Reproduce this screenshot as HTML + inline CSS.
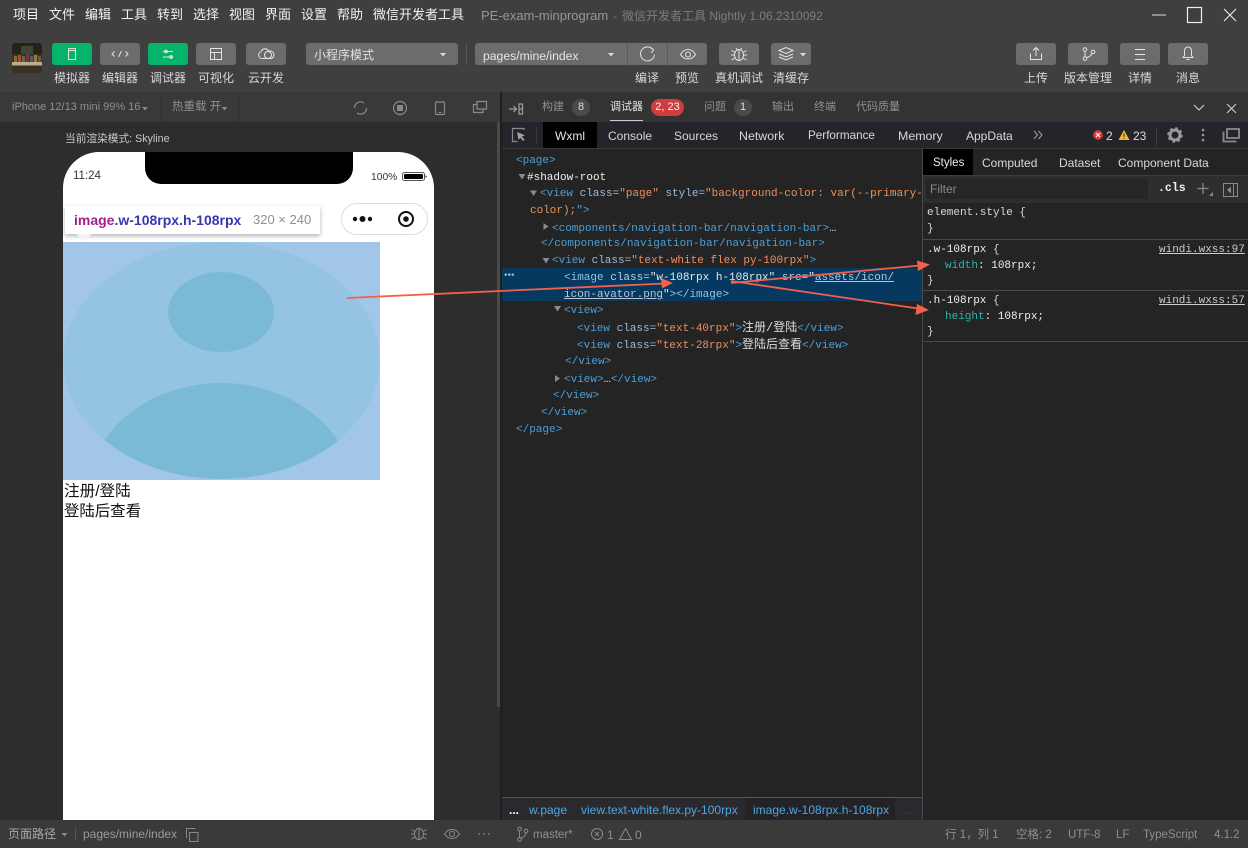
<!DOCTYPE html>
<html><head><meta charset="utf-8">
<style>
html,body{margin:0;padding:0;width:1248px;height:848px;overflow:hidden;background:#2d2d2d}
body{position:relative;font-family:"Liberation Sans","Noto Sans CJK SC",sans-serif;font-size:12px;color:#ddd}
.r{position:absolute}
.t{position:absolute;white-space:nowrap;line-height:16px}
.btn{position:absolute;top:43px;height:22px;background:#6c6c6c;border-radius:3px}
.g{background:#07b36a}
.lb{position:absolute;top:69px;line-height:18px;white-space:nowrap;color:#d8d8d8;font-size:12px;transform:translateX(-50%)}
.m{position:absolute;top:7px;font-size:13px;line-height:16px;color:#f2f2f2;white-space:nowrap}
.c{position:absolute;font-family:"Liberation Mono","Noto Sans CJK SC",monospace;font-size:11px;line-height:16px;white-space:nowrap;color:#4b9fd8}
.c i{font-style:normal;color:#9dbcdc}.c b{font-weight:normal;color:#ef8f5f}.c u{color:#b8c8d8}.c em{font-style:normal;color:#ddd;font-size:12px}
.s{position:absolute;font-family:"Liberation Mono",monospace;font-size:11px;line-height:16px;white-space:nowrap;color:#d8d8d8}
.s u{color:#ccc}.s i{font-style:normal;color:#2bb5a8}
svg{position:absolute;overflow:visible}
.ic{fill:none;stroke:#e4e4e4;stroke-width:1}
</style></head><body>

<!-- top bar -->
<div class="r" style="left:0;top:0;width:1248px;height:92px;background:#3f3f3f"></div>
<span class="m" style="left:13px">项目</span><span class="m" style="left:49px">文件</span><span class="m" style="left:85px">编辑</span><span class="m" style="left:121px">工具</span><span class="m" style="left:157px">转到</span><span class="m" style="left:193px">选择</span><span class="m" style="left:229px">视图</span><span class="m" style="left:265px">界面</span><span class="m" style="left:301px">设置</span><span class="m" style="left:337px">帮助</span><span class="m" style="left:373px">微信开发者工具</span>
<span class="t" style="left:481px;top:8px;color:#969696;font-size:13px">PE-exam-minprogram</span>
<span class="t" style="left:613px;top:8px;color:#7d7d7d;font-size:12px">-</span>
<span class="t" style="left:622px;top:8px;color:#7d7d7d;font-size:12px">微信开发者工具 Nightly 1.06.2310092</span>
<svg style="left:0;top:0" width="1248" height="30"><path d="M1152 15h14" stroke="#aaa" stroke-width="1.5"/><rect x="1187.5" y="7.5" width="14" height="15" fill="none" stroke="#eee" stroke-width="1.2"/><path d="M1224 9l12 12M1236 9l-12 12" stroke="#eee" stroke-width="1.1"/></svg>

<!-- avatar thumb -->
<svg style="left:12px;top:43px" width="30" height="30">
<defs><clipPath id="th"><rect width="30" height="30" rx="3"/></clipPath></defs>
<g clip-path="url(#th)">
<rect width="30" height="30" fill="#23231a"/>
<rect x="9" y="3" width="12" height="8" fill="#3f4530"/>
<rect x="0" y="11" width="30" height="9" fill="#3a3420"/>
<rect x="2" y="13" width="3" height="6" fill="#8a6a38"/><rect x="6" y="12" width="3" height="7" fill="#a0522d"/><rect x="10" y="13" width="3" height="6" fill="#5a6a5a"/><rect x="14" y="11" width="3" height="8" fill="#7a3a2a"/><rect x="18" y="13" width="3" height="6" fill="#4a6080"/><rect x="22" y="12" width="3" height="7" fill="#a07a3a"/><rect x="26" y="13" width="3" height="6" fill="#6a5a3a"/>
<rect x="0" y="19" width="30" height="3.500" fill="#b9ad90"/>
<rect x="0" y="22.500" width="30" height="7.500" fill="#3a3020"/>
</g></svg>

<!-- left buttons -->
<div class="btn g" style="left:52px;width:40px"></div>
<div class="btn" style="left:100px;width:40px"></div>
<div class="btn g" style="left:148px;width:40px"></div>
<div class="btn" style="left:196px;width:40px"></div>
<div class="btn" style="left:246px;width:40px"></div>
<svg style="left:0;top:0" width="300" height="70" class="ic">
<rect x="68.5" y="48.5" width="7" height="11"/><path d="M68.5 50.5h7" />
<path d="M114.5 51.500l-2.500 2.500 2.500 2.500M125.500 51.500l2.500 2.500-2.500 2.500M121.500 51l-3 6" />
<path d="M163 51.500h10M163 57h10"/><circle cx="166" cy="51.500" r="1.400"/><circle cx="171" cy="57" r="1.400"/>
<rect x="210.500" y="48.500" width="11" height="11"/><path d="M210.500 52.500h11M214.500 52.500v7"/>
<path d="M262 58.500a3.500 3.500 0 0 1-1-6.800 4 4 0 0 1 7.500-.5 3.800 3.800 0 0 1 3 7.300z"/><circle cx="268" cy="55" r="3.500"/>
</svg>
<span class="lb" style="left:72px">模拟器</span><span class="lb" style="left:120px">编辑器</span><span class="lb" style="left:168px">调试器</span><span class="lb" style="left:216px">可视化</span><span class="lb" style="left:266px">云开发</span>

<!-- mode dropdown -->
<div class="btn" style="left:306px;width:152px"></div>
<span class="t" style="left:314px;top:47px;color:#e2e2e2;font-size:12px">小程序模式</span>
<svg style="left:0;top:0" width="500" height="70"><path d="M440 53h6l-3 3.500z" fill="#ddd"/><path d="M466.500 43v22" stroke="#555"/></svg>

<!-- compile dropdown -->
<div class="btn" style="left:475px;width:232px"></div>
<span class="t" style="left:483px;top:48px;color:#e6e6e6;font-size:12.200px">pages/mine/index</span>
<svg style="left:0;top:0" width="860" height="70" class="ic">
<path d="M627.500 43v22M667.500 43v22" stroke="#5a5a5a"/>
<path d="M608 53h6l-3 3.500z" fill="#ddd" stroke="none"/>
<path d="M653 49.500a7 7 0 1 0 1.500 5" /><path d="M650 47.500l3.500 2-2 3.500" />
<path d="M680.500 54.500c2-3.500 5-5 7.500-5s5.500 1.500 7.500 5c-2 3-5 4.500-7.500 4.500s-5.500-1.500-7.500-4.500z"/><circle cx="688" cy="54.500" r="2.500"/>
</svg>
<div class="btn" style="left:719px;width:40px"></div>
<div class="btn" style="left:771px;width:40px"></div>
<svg style="left:0;top:0" width="860" height="70" class="ic">
<ellipse cx="739" cy="55" rx="4.500" ry="5.500"/><path d="M739 49.500v11M736 48l1.500 2M742 48l-1.500 2M731.500 50.500l3.500 2M746.500 50.500l-3.500 2M731 55h3.500M747 55h-3.500M731.500 60l3.500-2M746.500 60l-3.500-2"/>
<path d="M786 47.500l7 3-7 3-7-3zM779 54l7 3 7-3M779 57l7 3 7-3"/>
<path d="M800 53h6l-3 3.500z" fill="#ddd" stroke="none"/>
</svg>
<span class="lb" style="left:647px">编译</span><span class="lb" style="left:687px">预览</span><span class="lb" style="left:739px">真机调试</span><span class="lb" style="left:791px">清缓存</span>

<!-- right buttons -->
<div class="btn" style="left:1016px;width:40px"></div>
<div class="btn" style="left:1068px;width:40px"></div>
<div class="btn" style="left:1120px;width:40px"></div>
<div class="btn" style="left:1168px;width:40px"></div>
<svg style="left:0;top:0" width="1248" height="70" class="ic">
<path d="M1030.500 53.500v6h11v-6M1036 56v-8M1033 50.500l3-3 3 3"/>
<circle cx="1085" cy="49.500" r="1.800"/><circle cx="1085" cy="58.500" r="1.800"/><circle cx="1093" cy="52" r="1.800"/><path d="M1085 51.300v5.400M1086.500 57.500c3-.5 4.500-2 5.500-4"/>
<path d="M1135 49.500h10M1135 54.500h10M1135 59.500h10"/>
<path d="M1188 47c-2.500 0-3.500 2-3.500 4.500v4l-1.500 2h10l-1.500-2v-4c0-2.500-1-4.500-3.500-4.500zM1186.500 59.500h3"/>
</svg>
<span class="lb" style="left:1036px">上传</span><span class="lb" style="left:1088px">版本管理</span><span class="lb" style="left:1140px">详情</span><span class="lb" style="left:1188px">消息</span>

<!-- simulator toolbar -->
<div class="r" style="left:0;top:92px;width:500px;height:30px;background:#393939"></div>
<div class="r" style="left:160px;top:92px;width:1px;height:30px;background:#343434"></div>
<div class="r" style="left:239px;top:92px;width:1px;height:30px;background:#343434"></div>
<span class="t" style="left:12px;top:99px;color:#8f8f8f;font-size:11px">iPhone 12/13 mini 99% 16</span>
<span class="t" style="left:172px;top:99px;color:#8f8f8f;font-size:11.500px">热重载 开</span>
<svg style="left:0;top:90px" width="500" height="34" fill="none" stroke="#8a8a8a" stroke-width="1.200">
<path d="M142 17h6l-3 3.500zM221.500 17h6l-3 3.500z" fill="#8a8a8a" stroke="none"/>
<path d="M354.500 18a6 6 0 0 1 9.500-5M366.500 18a6 6 0 0 1-9.500 5"/>
<circle cx="400" cy="18" r="6.500"/><rect x="397" y="15" width="6" height="6" fill="#8a8a8a" stroke="none"/>
<rect x="435.500" y="12" width="9" height="12.500" rx="1"/><path d="M438.500 22.500h3"/>
<path d="M477 11.500h9.500v7.500h-9.500zM477 14.500h-3.500v8h9.500v-4"/>
</svg>

<!-- simulator area -->
<div class="r" style="left:0;top:122px;width:498px;height:698px;background:#2d2d2d"></div>
<div class="r" style="left:497px;top:122px;width:3px;height:585px;background:#4a4a4a"></div>
<span class="t" style="left:65px;top:131px;color:#c8c8c8;font-size:10.700px">当前渲染模式: Skyline</span>

<!-- phone -->
<div class="r" style="left:63px;top:152px;width:371px;height:668px;background:#fff;border-radius:36px 36px 0 0;overflow:hidden">
  <div class="r" style="left:82px;top:0;width:208px;height:32px;background:#000;border-radius:0 0 16px 16px"></div>
</div>
<span class="t" style="left:73px;top:168px;color:#333;font-size:11.500px">11:24</span>
<span class="t" style="left:371px;top:170px;color:#333;font-size:10.300px">100%</span>
<svg style="left:0;top:0" width="500" height="240">
<rect x="402.500" y="172.500" width="22" height="8" rx="2" fill="none" stroke="#555"/><rect x="404" y="174" width="19" height="5" rx="1" fill="#000"/><path d="M425.500 175v3l1.500-1.500z" fill="#333"/>
</svg>
<div class="r" style="left:341px;top:203px;width:85px;height:30px;border:1px solid #ddd;border-radius:16px;background:#fff"></div>
<svg style="left:0;top:0" width="500" height="240">
<circle cx="355" cy="219" r="2.200" fill="#111"/><circle cx="362.500" cy="219" r="3" fill="#111"/><circle cx="370" cy="219" r="2.200" fill="#111"/>
<circle cx="406" cy="219" r="7" fill="none" stroke="#111" stroke-width="2"/><circle cx="406" cy="219" r="2.800" fill="#111"/>
</svg>

<!-- image -->
<svg style="left:63px;top:242px" width="317" height="238">
<defs><clipPath id="cp"><ellipse cx="158.500" cy="118.500" rx="158" ry="118.500"/></clipPath></defs>
<rect width="317" height="238" fill="#a1c6e8"/>
<ellipse cx="158.500" cy="118.500" rx="158" ry="118.500" fill="#95c3e2"/>
<ellipse cx="158" cy="70" rx="53" ry="40" fill="#7bbad4"/>
<ellipse cx="158" cy="256" rx="135" ry="115" fill="#7bbad4" clip-path="url(#cp)"/>
</svg>

<!-- tooltip -->
<div class="r" style="left:65px;top:206px;width:255px;height:28px;background:#fff;box-shadow:0 2px 5px rgba(0,0,0,.3);border-radius:1px"></div>
<svg style="left:0;top:0" width="200" height="245"><path d="M76 234h16l-8 7.500z" fill="#f4f4f4"/></svg>
<span class="t" style="left:74px;top:212px;font-size:14px;font-weight:bold"><span style="color:#a1208a">image</span><span style="color:#3a36b0">.w-108rpx.h-108rpx</span></span>
<span class="t" style="left:253px;top:212px;font-size:13px;color:#8f8f8f">320 × 240</span>

<span class="t" style="left:64px;top:483px;color:#111;font-size:15.600px;line-height:18px">注册/登陆</span>
<span class="t" style="left:64px;top:503px;color:#111;font-size:15.400px;line-height:18px">登陆后查看</span>

<!-- devtools tab bar -->
<div class="r" style="left:500px;top:92px;width:748px;height:30px;background:#333"></div>
<div class="r" style="left:500px;top:92px;width:2px;height:728px;background:#1f1f1f"></div>
<span class="t" style="left:542px;top:99px;color:#909090;font-size:11px">构建</span>
<div class="r" style="left:572px;top:99px;width:18px;height:17px;border-radius:9px;background:#4a4a4a;color:#ddd;text-align:center;line-height:17px;font-size:11px">8</div>
<span class="t" style="left:610px;top:99px;color:#e8e8e8;font-size:11px">调试器</span>
<div class="r" style="left:610px;top:120px;width:33px;height:1px;background:#ccc"></div>
<div class="r" style="left:651px;top:99px;width:33px;height:17px;border-radius:9px;background:#d13c3c;color:#f4f4f4;text-align:center;line-height:17px;font-size:11px">2, 23</div>
<span class="t" style="left:704px;top:99px;color:#909090;font-size:11px">问题</span>
<div class="r" style="left:734px;top:99px;width:18px;height:17px;border-radius:9px;background:#4a4a4a;color:#ddd;text-align:center;line-height:17px;font-size:11px">1</div>
<span class="t" style="left:772px;top:99px;color:#909090;font-size:11px">输出</span>
<span class="t" style="left:814px;top:99px;color:#909090;font-size:11px">终端</span>
<span class="t" style="left:856px;top:99px;color:#909090;font-size:11px">代码质量</span>
<svg style="left:0;top:90px" width="1248" height="30" fill="none" stroke="#c8c8c8" stroke-width="1.200"><path d="M1194 15l5 5 5-5M1227 14l9 9M1236 14l-9 9"/></svg>

<!-- wxml tabs -->
<div class="r" style="left:502px;top:122px;width:746px;height:26px;background:#24252a"></div>
<div class="r" style="left:502px;top:148px;width:746px;height:1px;background:#3a3a3a"></div>
<div class="r" style="left:536px;top:127px;width:1px;height:17px;background:#3a3a3a"></div>
<div class="r" style="left:543px;top:122px;width:54px;height:26px;background:#000"></div>
<svg style="left:0;top:90px" width="530" height="60" fill="none" stroke="#a0a0a0" stroke-width="1.200">
<path d="M509 19h7M513.500 16l3 3-3 3"/><rect x="519" y="14" width="3.500" height="10"/><path d="M519 19h3.500"/>
<path d="M524 40v-1.500h-11.500v13h5" stroke="#8a8a8a"/><path d="M517 42l8 3.200-3.200 1.300 2.800 3.200-1.600 1.300-2.700-3.200-1.800 2.200z" fill="#a0a0a0" stroke="none"/>
</svg>
<span class="t" style="left:555px;top:128px;color:#e8e8e8;font-size:12px">Wxml</span>
<span class="t" style="left:608px;top:128px;color:#d8d8d8;font-size:12px">Console</span>
<span class="t" style="left:674px;top:128px;color:#d8d8d8;font-size:12px">Sources</span>
<span class="t" style="left:739px;top:128px;color:#d8d8d8;font-size:12.400px">Network</span>
<span class="t" style="left:808px;top:128px;color:#d8d8d8;font-size:11.700px">Performance</span>
<span class="t" style="left:898px;top:128px;color:#d8d8d8;font-size:12.400px">Memory</span>
<span class="t" style="left:966px;top:128px;color:#d8d8d8;font-size:12px">AppData</span>
<span class="t" style="left:1106px;top:128px;color:#ddd;font-size:12px">2</span>
<span class="t" style="left:1133px;top:128px;color:#ddd;font-size:12px">23</span>
<svg style="left:0;top:120px" width="1248" height="30">
<path d="M1034 11l3.500 4-3.500 4M1038.500 11l3.500 4-3.500 4" fill="none" stroke="#9a9a9a" stroke-width="1.100"/>
<circle cx="1098" cy="15" r="4.800" fill="#d93a3a"/><path d="M1096 13l4 4M1100 13l-4 4" stroke="#fff" stroke-width="1.200"/>
<path d="M1124 10l5.500 10h-11z" fill="#f2b632"/><path d="M1124 13.500v3.500M1124 18v1" stroke="#333" stroke-width="1"/>
<path d="M1156.500 8v18" stroke="#3c3c3c"/>
<circle cx="1175" cy="15" r="5" fill="none" stroke="#9a9a9a" stroke-width="3"/><circle cx="1175" cy="15" r="7" fill="none" stroke="#9a9a9a" stroke-width="1.500" stroke-dasharray="2.500 3"/>
<circle cx="1203" cy="10" r="1.300" fill="#9a9a9a"/><circle cx="1203" cy="15" r="1.300" fill="#9a9a9a"/><circle cx="1203" cy="20" r="1.300" fill="#9a9a9a"/>
<path d="M1224.500 12.500h-1v9h12v-1" fill="none" stroke="#8a8a8a" stroke-width="1.800"/><rect x="1227" y="9" width="12" height="9" fill="none" stroke="#8a8a8a" stroke-width="1.800"/>
</svg>

<!-- wxml tree -->
<div class="r" style="left:502px;top:149px;width:420px;height:649px;background:#242424"></div>
<div class="r" style="left:502px;top:268px;width:420px;height:33px;background:#05395f"></div>
<span class="t" style="left:504px;top:268px;color:#9ab;font-size:10px;letter-spacing:0">•••</span>
<div class="c" style="left:516px;top:153px">&lt;page&gt;</div>
<div class="c" style="left:527px;top:170px;color:#f0f0f0">#shadow-root</div>
<div class="c" style="left:540px;top:186px">&lt;view <i>class=</i><b>"page"</b> <i>style=</i><b>"background-color: var(--primary-</b></div>
<div class="c" style="left:530px;top:203px"><b>color);</b>"&gt;</div>
<div class="c" style="left:552px;top:220px">&lt;components/navigation-bar/navigation-bar&gt;<em>…</em></div>
<div class="c" style="left:541px;top:236px">&lt;/components/navigation-bar/navigation-bar&gt;</div>
<div class="c" style="left:552px;top:253px">&lt;view <i>class=</i><b>"text-white flex py-100rpx"</b>&gt;</div>
<div class="c" style="left:564px;top:270px;color:#8fc4e8">&lt;image <i style="color:#b8d0e4">class=</i><span style="color:#e8e8e8">"w-108rpx h-108rpx"</span> <i style="color:#b8d0e4">src=</i><span style="color:#e8e8e8">"</span><u>assets/icon/</u></div>
<div class="c" style="left:564px;top:287px;color:#8fc4e8"><u>icon-avator.png</u><span style="color:#e8e8e8">"</span>&gt;&lt;/image&gt;</div>
<div class="c" style="left:564px;top:303px">&lt;view&gt;</div>
<div class="c" style="left:577px;top:320px">&lt;view <i>class=</i><b>"text-40rpx"</b>&gt;<em>注册/登陆</em>&lt;/view&gt;</div>
<div class="c" style="left:577px;top:337px">&lt;view <i>class=</i><b>"text-28rpx"</b>&gt;<em>登陆后查看</em>&lt;/view&gt;</div>
<div class="c" style="left:565px;top:354px">&lt;/view&gt;</div>
<div class="c" style="left:564px;top:371px">&lt;view&gt;<em>…</em>&lt;/view&gt;</div>
<div class="c" style="left:553px;top:388px">&lt;/view&gt;</div>
<div class="c" style="left:541px;top:405px">&lt;/view&gt;</div>
<div class="c" style="left:516px;top:422px">&lt;/page&gt;</div>
<svg style="left:500px;top:150px" width="80" height="240" fill="#8a8a8a">
<path d="M18.500 24h7l-3.500 5.500zM30 40.500h7l-3.500 5.500zM43.500 73v7l5-3.500zM42.500 108h7l-3.500 5.500zM54 156h7l-3.500 5.500zM55 225v7l5-3.500z"/>
</svg>

<!-- breadcrumb -->
<div class="r" style="left:502px;top:798px;width:420px;height:22px;background:#2a2a2e"></div>
<div class="r" style="left:502px;top:797px;width:420px;height:1px;background:#555"></div>
<div class="r" style="left:745px;top:798px;width:150px;height:22px;background:#232327"></div>
<span class="t" style="left:509px;top:802px;color:#fff;font-size:12px;font-weight:bold">...</span>
<span class="t" style="left:529px;top:802px;color:#4fa6e0;font-size:12px">w.page</span>
<span class="t" style="left:581px;top:802px;color:#4fa6e0;font-size:12px">view.text-white.flex.py-100rpx</span>
<span class="t" style="left:753px;top:802px;color:#4fa6e0;font-size:12px">image.w-108rpx.h-108rpx</span>
<span class="t" style="left:903px;top:802px;color:#444;font-size:12px">...</span>

<!-- styles panel -->
<div class="r" style="left:922px;top:149px;width:326px;height:671px;background:#242424"></div>
<div class="r" style="left:922px;top:149px;width:1px;height:671px;background:#4a4a4a"></div>
<div class="r" style="left:923px;top:175px;width:325px;height:1px;background:#3d3d3d"></div>
<div class="r" style="left:923px;top:149px;width:50px;height:26px;background:#000"></div>
<span class="t" style="left:933px;top:155px;color:#eee;font-size:11.500px">Styles</span>
<span class="t" style="left:982px;top:155px;color:#d8d8d8;font-size:12px">Computed</span>
<span class="t" style="left:1059px;top:155px;color:#d8d8d8;font-size:12px">Dataset</span>
<span class="t" style="left:1118px;top:155px;color:#d8d8d8;font-size:12px">Component Data</span>
<div class="r" style="left:923px;top:176px;width:325px;height:27px;background:#2e2e2e"></div>
<div class="r" style="left:926px;top:179px;width:222px;height:20px;background:#262626"></div>
<span class="t" style="left:930px;top:181px;color:#8a8a8a;font-size:12px">Filter</span>
<span class="t" style="left:1158px;top:181px;color:#eee;font-size:11.500px;font-weight:bold;font-family:'Liberation Mono',monospace">.cls</span>
<svg style="left:1190px;top:175px" width="58" height="28">
<path d="M13 8v11M7.500 13.500h11" stroke="#8a8a8a" stroke-width="1.300"/><path d="M23 21h-4l4-4z" fill="#8a8a8a"/>
<rect x="33.500" y="8.500" width="14" height="13" fill="none" stroke="#8a8a8a"/><path d="M43.500 8.500v13" stroke="#8a8a8a"/><path d="M41 11.500v7l-4-3.500z" fill="#8a8a8a"/>
</svg>
<div class="s" style="left:927px;top:205px">element.style {</div>
<div class="s" style="left:927px;top:221px">}</div>
<div class="r" style="left:923px;top:239px;width:325px;height:1px;background:#4a4a4a"></div>
<div class="s" style="left:927px;top:242px;color:#eee">.w-108rpx <span style="color:#d8d8d8">{</span></div>
<div class="s" style="left:1159px;top:242px"><u>windi.wxss:97</u></div>
<div class="s" style="left:945px;top:258px;color:#eee"><i>width</i>: 108rpx;</div>
<div class="s" style="left:927px;top:273px">}</div>
<div class="r" style="left:923px;top:290px;width:325px;height:1px;background:#4a4a4a"></div>
<div class="s" style="left:927px;top:293px;color:#eee">.h-108rpx <span style="color:#d8d8d8">{</span></div>
<div class="s" style="left:1159px;top:293px"><u>windi.wxss:57</u></div>
<div class="s" style="left:945px;top:309px;color:#eee"><i>height</i>: 108rpx;</div>
<div class="s" style="left:927px;top:324px">}</div>
<div class="r" style="left:923px;top:341px;width:325px;height:1px;background:#4a4a4a"></div>

<!-- status bar -->
<div class="r" style="left:0;top:820px;width:1248px;height:28px;background:#3a3a3a"></div>
<div class="r" style="left:75px;top:828px;width:1px;height:12px;background:#555"></div>
<span class="t" style="left:8px;top:826px;color:#a8a8a8;font-size:12px">页面路径</span>
<span class="t" style="left:83px;top:826px;color:#9a9a9a;font-size:12px">pages/mine/index</span>
<span class="t" style="left:533px;top:827px;color:#8f8f8f;font-size:11.500px">master*</span>
<span class="t" style="left:607px;top:827px;color:#8f8f8f;font-size:12px">1</span>
<span class="t" style="left:635px;top:827px;color:#8f8f8f;font-size:12px">0</span>
<span class="t" style="left:945px;top:827px;color:#8f8f8f;font-size:11.500px">行 1，列 1</span>
<span class="t" style="left:1016px;top:827px;color:#8f8f8f;font-size:11.500px">空格: 2</span>
<span class="t" style="left:1068px;top:827px;color:#8f8f8f;font-size:11.500px">UTF-8</span>
<span class="t" style="left:1116px;top:827px;color:#8f8f8f;font-size:11.500px">LF</span>
<span class="t" style="left:1143px;top:827px;color:#8f8f8f;font-size:11.500px">TypeScript</span>
<span class="t" style="left:1214px;top:827px;color:#8f8f8f;font-size:11.500px">4.1.2</span>
<svg style="left:0;top:820px" width="1248" height="28" fill="none" stroke="#8a8a8a" stroke-width="1">
<path d="M61.500 13h6l-3 3.500z" fill="#8a8a8a" stroke="none"/>
<path d="M189.500 12.500h8.500v9h-8.500zM186.500 18v-9.500h9" />
<ellipse cx="419" cy="14" rx="4.500" ry="5.500"/><path d="M419 8.500v11M411.500 9.500l3.500 2M426.500 9.500l-3.500 2M411 14h3.500M427 14h-3.500M411.500 19l3.500-2M426.500 19l-3.500-2"/>
<path d="M444.500 14c2-3 5-4.500 7.500-4.500s5.500 1.500 7.500 4.500c-2 3-5 4.500-7.500 4.500s-5.500-1.500-7.500-4.500z"/><circle cx="452" cy="14" r="2.500"/>
<circle cx="479" cy="14" r=".9" fill="#8a8a8a" stroke="none"/><circle cx="484" cy="14" r=".9" fill="#8a8a8a" stroke="none"/><circle cx="489" cy="14" r=".9" fill="#8a8a8a" stroke="none"/>
<circle cx="519.500" cy="9" r="1.800"/><circle cx="519.500" cy="19.500" r="1.800"/><circle cx="526" cy="11" r="1.800"/><path d="M519.500 10.800v6.900M520.500 18c3-.5 5-2.500 5.500-5.200"/>
<circle cx="597" cy="14" r="5.500"/><path d="M595 12l4 4M599 12l-4 4"/>
<path d="M625.500 8.500l6 11h-12z"/>
</svg>

<!-- arrows -->
<svg style="left:0;top:0" width="1248" height="848" fill="none">
<path d="M347 298L665 283.500" stroke="#f4604e" stroke-width="1.800"/><path d="M673 283l-12-5 1 10.500z" fill="#f4604e"/>
<path d="M731 283L920 265.500" stroke="#f4604e" stroke-width="1.800"/><path d="M930 264.500l-13-4 1 10.500z" fill="#f4604e"/>
<path d="M731 281L918 308.500" stroke="#f4604e" stroke-width="1.800"/><path d="M929 310l-12-6-1.500 11z" fill="#f4604e"/>
</svg>

</body></html>
